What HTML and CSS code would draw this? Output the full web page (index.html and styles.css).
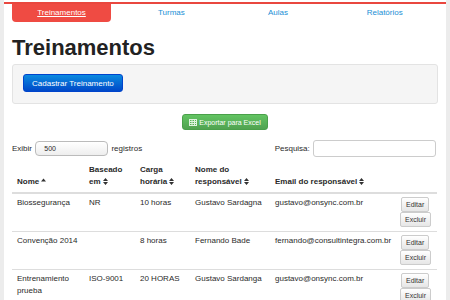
FILE: index.html
```html
<!DOCTYPE html>
<html lang="pt-BR">

<head>
    <meta charset="utf-8">
    <meta name="viewport" content="width=device-width, initial-scale=1.0">
    <title>Treinamentos</title>
    <link rel="stylesheet" href="styles.css">
</head>

<body>
    <div class="pagina">
        <nav class="menu">
            <a href="#" class="aba ativa">Treinamentos</a>
            <a href="#" class="aba">Turmas</a>
            <a href="#" class="aba">Aulas</a>
            <a href="#" class="aba">Relatórios</a>
        </nav>

        <h1>Treinamentos</h1>

        <div class="well">
            <button class="btn btn-azul">Cadastrar Treinamento</button>
        </div>

        <div class="exportar">
            <button class="btn btn-verde">
                <svg width="8" height="7" viewBox="0 0 8 7"><rect x="0.5" y="0.5" width="7" height="6" fill="none" stroke="#dff3df" /><path d="M0.5 2.5h7M0.5 4.5h7M3 0.5v6M5.5 0.5v6" stroke="#dff3df" /></svg>
                Exportar para Excel
            </button>
        </div>

        <div class="filtros">
            <label class="exibir">Exibir <span class="select">500</span> registros</label>
            <label class="pesquisa">Pesquisa: <input type="text"></label>
        </div>

        <table class="tabela">
            <colgroup>
                <col style="width:72px">
                <col style="width:51px">
                <col style="width:55px">
                <col style="width:80px">
                <col style="width:125px">
                <col style="width:42px">
            </colgroup>
            <thead>
                <tr>
                    <th>Nome <svg class="ord" width="5" height="7" viewBox="0 0 5 7"><path d="M0 3.5L2.5 0.5L5 3.5z" fill="#333" /></svg></th>
                    <th>Baseado em <svg class="ord" width="5" height="7" viewBox="0 0 5 7"><path d="M0 3L2.5 0L5 3zM0 4L2.5 7L5 4z" fill="#333" /></svg></th>
                    <th>Carga horária <svg class="ord" width="5" height="7" viewBox="0 0 5 7"><path d="M0 3L2.5 0L5 3zM0 4L2.5 7L5 4z" fill="#333" /></svg></th>
                    <th>Nome do responsável <svg class="ord" width="5" height="7" viewBox="0 0 5 7"><path d="M0 3L2.5 0L5 3zM0 4L2.5 7L5 4z" fill="#333" /></svg></th>
                    <th>Email do responsável <svg class="ord" width="5" height="7" viewBox="0 0 5 7"><path d="M0 3L2.5 0L5 3zM0 4L2.5 7L5 4z" fill="#333" /></svg></th>
                    <th></th>
                </tr>
            </thead>
            <tbody>
                <tr>
                    <td>Biossegurança</td>
                    <td>NR</td>
                    <td>10 horas</td>
                    <td>Gustavo Sardagna</td>
                    <td>gustavo@onsync.com.br</td>
                    <td class="acoes"><button class="btn btn-mini">Editar</button><button class="btn btn-mini">Excluir</button></td>
                </tr>
                <tr>
                    <td>Convenção 2014</td>
                    <td></td>
                    <td>8 horas</td>
                    <td>Fernando Bade</td>
                    <td>fernando@consultintegra.com.br</td>
                    <td class="acoes"><button class="btn btn-mini">Editar</button><button class="btn btn-mini">Excluir</button></td>
                </tr>
                <tr>
                    <td>Entrenamiento prueba</td>
                    <td>ISO-9001</td>
                    <td>20 HORAS</td>
                    <td>Gustavo Sardanga</td>
                    <td>gustavo@onsync.com.br</td>
                    <td class="acoes"><button class="btn btn-mini">Editar</button><button class="btn btn-mini">Excluir</button></td>
                </tr>
            </tbody>
        </table>
    </div>
</body>

</html>
```

FILE: styles.css
```css
body {
    margin: 0;
    background-color: #ececec;
    font-family: "Liberation Sans", Arial, sans-serif;
    font-size: 8px;
    color: #2a2a2a;
}

.pagina {
    margin: 0 4px;
    padding: 2px 8px 20px;
    background-color: white;
    min-height: 300px;
}

/***************menu**************/
.menu {
    display: flex;
    border-top: 2px solid #e9473f;
    margin: 0 -8px;
    padding: 0 8px;
}

.aba {
    flex: 1;
    height: 18px;
    line-height: 17px;
    text-align: center;
    color: #1a8fd6;
    text-decoration: none;
    border-radius: 0 0 4px 4px;
}

.ativa {
    flex: none;
    width: 99px;
    margin-right: 7px;
    background-color: #ef4b43;
    color: white;
    text-decoration: underline;
}

h1 {
    margin: 13px 0 3px;
    font-size: 22px;
    line-height: 26px;
    color: #222;
}

/***************well**************/
.well {
    background-color: #f5f5f5;
    border: 1px solid #e3e3e3;
    border-radius: 3px;
    padding: 9px 10px 11px;
}

.btn {
    font-family: inherit;
    border-radius: 3px;
    cursor: pointer;
}

.btn-azul {
    height: 18px;
    padding: 0 8px;
    font-size: 8px;
    color: white;
    border: 1px solid #0044cc;
    background-image: linear-gradient(#0a8ae0, #0048c8);
}

.exportar {
    text-align: center;
    margin-top: 10px;
}

.btn-verde {
    height: 16px;
    padding: 0 6px;
    font-size: 7px;
    color: white;
    border: 1px solid #4aa04a;
    background-image: linear-gradient(#62c462, #51a351);
}

.btn-verde svg {
    vertical-align: -1px;
}

/***************filtros**************/
.filtros {
    display: flex;
    justify-content: space-between;
    align-items: center;
    margin-top: 10px;
}

.select {
    display: inline-block;
    width: 63px;
    height: 13px;
    line-height: 13px;
    padding-left: 8px;
    margin: 0 1px;
    border: 1px solid #bbb;
    border-radius: 4px;
    background-image: linear-gradient(#fff, #eee);
    font-size: 7px;
    vertical-align: middle;
}

.pesquisa input {
    width: 121px;
    height: 15px;
    margin: 0 2px 0 1px;
    padding: 0;
    border: 1px solid #ccc;
    border-radius: 3px;
    vertical-align: middle;
}

/***************tabel**************/
.tabela {
    width: 425px;
    table-layout: fixed;
    border-collapse: collapse;
    margin-top: 7px;
}

.tabela th {
    text-align: left;
    vertical-align: bottom;
    font-weight: bold;
    line-height: 12px;
    padding: 0 5px 4px;
    border-bottom: 2px solid #ddd;
}

.tabela td {
    vertical-align: top;
    line-height: 12px;
    padding: 3px 5px 4px;
    border-top: 1px solid #ddd;
    height: 30px;
}

.ord {
    vertical-align: -1px;
}

.acoes {
    text-align: left;
}

.btn-mini {
    display: block;
    height: 15px;
    padding: 0 4px;
    margin-left: 1px;
    font-size: 7px;
    color: #333;
    border: 1px solid #ccc;
    background-image: linear-gradient(#fff, #e6e6e6);
    border-radius: 2px;
}

.btn-mini + .btn-mini {
    margin-left: 0;
}
```
